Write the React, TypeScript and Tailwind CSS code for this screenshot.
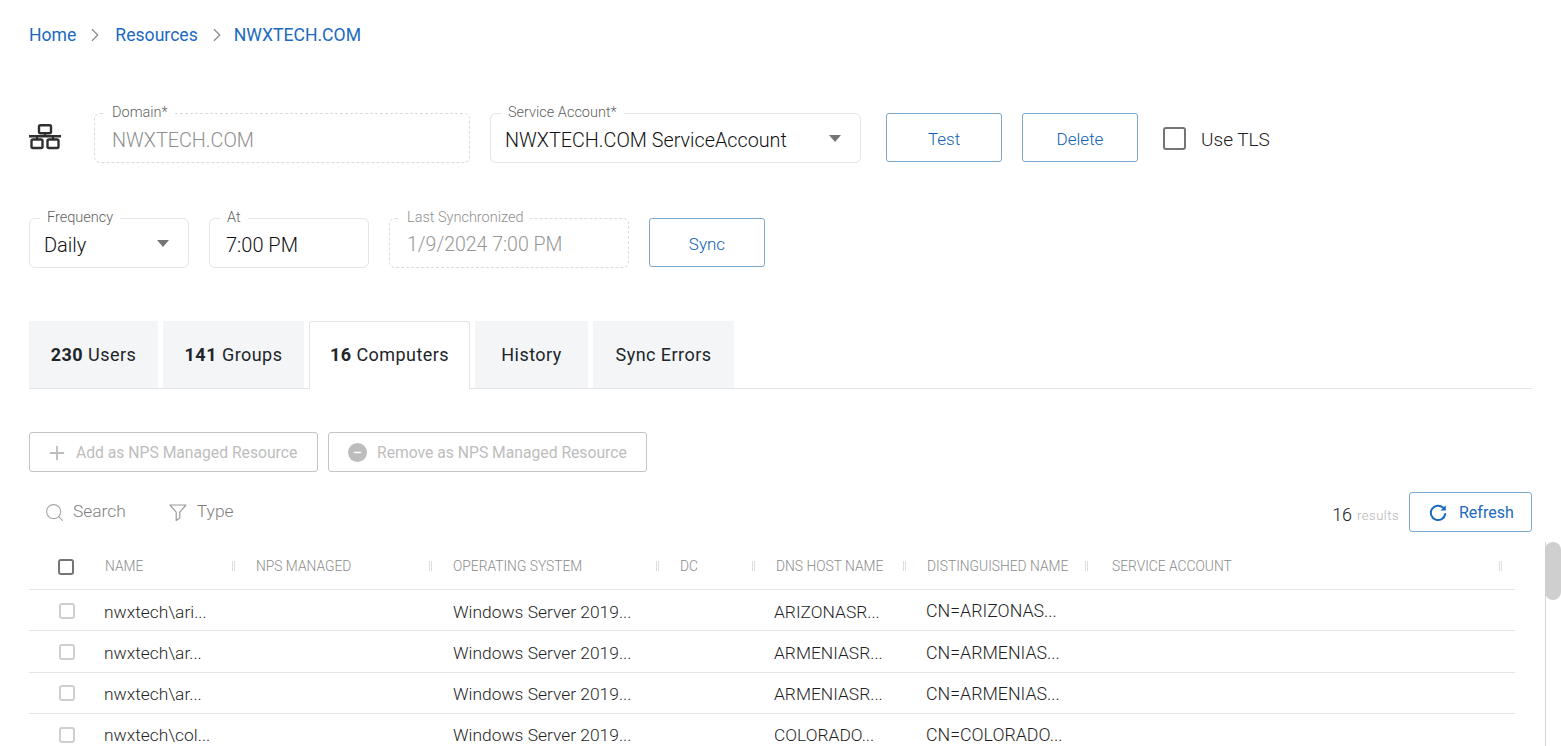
import React from "react";
import { Search, Plus, Minus, ChevronRight } from "lucide-react";

function Outlined({ label, dashed, className, children }: { label: string; dashed?: boolean; className: string; children: React.ReactNode }) {
  return (
    <div className={`relative h-[50px] rounded-[6px] border flex items-center pt-[3px] ${dashed ? "border-dashed border-[#dcdcdc]" : "border-[#e3e5e8]"} ${className}`}>
      <span className={`absolute -top-[10px] left-[10px] bg-white px-[7px] text-[14.5px] font-light leading-[18px] whitespace-nowrap ${dashed ? (label === "Domain*" ? "text-[#5f5f5f]" : "text-[#8f8f8f]") : "text-[#5f5f5f]"}`}>{label}</span>
      {children}
    </div>
  );
}

function Caret() {
  return <span className="w-0 h-0 -mt-[2px] border-l-[6.5px] border-r-[6.5px] border-t-[7px] border-l-transparent border-r-transparent border-t-[#757575]" />;
}

function OutlineButton({ children, className = "" }: { children: React.ReactNode; className?: string }) {
  return (
    <button className={`self-start w-[116px] h-[49px] pt-[4px] rounded-[3px] border border-[#7ba7d0] text-[#0f5fb5] text-[17px] font-light flex items-center justify-center ${className}`}>{children}</button>
  );
}

function Check({ dark, className = "" }: { dark?: boolean; className?: string }) {
  return <span className={`block rounded-[3px] border-2 ${dark ? "border-[#757575]" : "border-[#cfcfcf]"} ${className}`} />;
}

const cols = "grid grid-cols-[75px_151px_197px_227px_96px_151px_185px_1fr]";

function Head({ label, pr = "pr-[20px]" }: { label: string; pr?: string }) {
  return (
    <div className={`flex items-center justify-between pl-px ${pr} text-[13.8px] font-light text-[#8c8c8c] whitespace-nowrap`}>
      <span>{label}</span>
      <span className="w-[3px] h-[10px] border-x border-[#dedede]" />
    </div>
  );
}

const rows = [
  ["nwxtech\\ari...", "ARIZONASR...", "CN=ARIZONAS..."],
  ["nwxtech\\ar...", "ARMENIASR...", "CN=ARMENIAS..."],
  ["nwxtech\\ar...", "ARMENIASR...", "CN=ARMENIAS..."],
  ["nwxtech\\col...", "COLORADO...", "CN=COLORADO..."],
];

const tabs = [
  { n: "230", t: "Users", w: "w-[129px]" },
  { n: "141", t: "Groups", w: "w-[141px]" },
  { n: "16", t: "Computers", w: "w-[161px]", active: true },
  { t: "History", w: "w-[113px]" },
  { t: "Sync Errors", w: "w-[141px]" },
];

export default function App() {
  return (
    <div className="h-[746px] overflow-hidden bg-white px-[29px] font-['Roboto',sans-serif] text-[#212529]">
      <nav className="pt-[23px] h-[113px] flex items-start text-[17.6px] leading-[24px] text-[#1b6ac0]">
        <span>Home</span>
        <ChevronRight className="w-[22px] h-[22px] ml-[8px] mr-[9px] mt-px text-[#8a8a8a]" strokeWidth={1.25} />
        <span>Resources</span>
        <ChevronRight className="w-[22px] h-[22px] ml-[8px] mr-[6px] mt-px text-[#8a8a8a]" strokeWidth={1.25} />
        <span>NWXTECH.COM</span>
      </nav>

      <div className="flex items-center">
        <svg width="32" height="26" viewBox="0 0 32 26" fill="none" stroke="#2f2f2f" strokeWidth="2.4" className="shrink-0 mb-[2px]">
          <rect x="10" y="1.2" width="12" height="8" rx="1.5" />
          <path d="M16 9v3M0 12.2h32M8 12.2v3M24 12.2v3" />
          <rect x="2.5" y="15.5" width="11" height="8.5" rx="1.5" />
          <rect x="18.5" y="15.5" width="11" height="8.5" rx="1.5" />
        </svg>
        <Outlined label="Domain*" dashed className="w-[376px] ml-[33px] pl-[17px]">
          <span className="mt-[2px] text-[19.8px] font-light text-[#8f8f8f]">NWXTECH.COM</span>
        </Outlined>
        <Outlined label="Service Account*" className="w-[371px] ml-[20px] pl-[14px] pr-[19px] justify-between">
          <span className="mt-[2px] text-[19.8px] font-light text-[#111111] whitespace-nowrap">NWXTECH.COM ServiceAccount</span>
          <Caret />
        </Outlined>
        <OutlineButton className="ml-[25px]">Test</OutlineButton>
        <OutlineButton className="ml-[20px]">Delete</OutlineButton>
        <Check dark className="w-[23px] h-[23px] ml-[25px]" />
        <span className="ml-[15px] mt-[5px] text-[19px] font-light text-[#222222]">Use TLS</span>
      </div>

      <div className="flex items-center mt-[55px]">
        <Outlined label="Frequency" className="w-[160px] pl-[14px] pr-[19px] justify-between">
          <span className="text-[20px] font-light text-[#111111]">Daily</span>
          <Caret />
        </Outlined>
        <Outlined label="At" className="w-[160px] ml-[20px] pl-[16px]">
          <span className="text-[20px] font-light text-[#111111]">7:00 PM</span>
        </Outlined>
        <Outlined label="Last Synchronized" dashed className="w-[240px] ml-[20px] pl-[17px]">
          <span className="text-[19.5px] font-light text-[#969696]">1/9/2024 7:00 PM</span>
        </Outlined>
        <OutlineButton className="ml-[20px]">Sync</OutlineButton>
      </div>

      <div className="flex gap-[5px] mt-[53px] border-b border-[#e3e5e8] h-[68px] items-end">
        {tabs.map((t) => (
          <div
            key={t.t}
            className={`${t.w} flex items-center justify-center text-[18px] tracking-[0.45px] ${
              t.active ? "h-[68px] -mb-px pb-[2px] bg-white border border-b-0 border-[#e3e5e8] rounded-t-[3px]" : "h-[67px] bg-[#f3f5f7]"
            }`}
          >
            {t.n && <b className="font-bold mr-[5px]">{t.n}</b>}
            <span>{t.t}</span>
          </div>
        ))}
      </div>

      <div className="flex gap-[10px] mt-[43px]">
        <button className="w-[289px] h-[40px] pt-px rounded-[3px] border border-[#c4c4c4] flex items-center pl-[16px] text-[15.7px] text-[#bdbdbd]">
          <Plus className="w-[22px] h-[22px] mr-[8px] text-[#bdbdbd]" strokeWidth={2} />
          Add as NPS Managed Resource
        </button>
        <button className="w-[319px] h-[40px] pt-px rounded-[3px] border border-[#c4c4c4] flex items-center pl-[19px] text-[15.7px] text-[#bdbdbd]">
          <span className="w-[19px] h-[19px] mr-[10px] rounded-full bg-[#bdbdbd] flex items-center justify-center">
            <Minus className="w-[11px] h-[11px] text-white" strokeWidth={3} />
          </span>
          Remove as NPS Managed Resource
        </button>
      </div>

      <div className="flex items-center mt-[20px] h-[40px]">
        <Search className="w-[21px] h-[21px] ml-[15px] text-[#a8a8a8]" strokeWidth={1.25} />
        <span className="ml-[8px] -mt-[2px] text-[17.4px] font-light text-[#7f7f7f]">Search</span>
        <svg width="20" height="20" viewBox="0 0 20 20" fill="none" stroke="#9c9c9c" strokeWidth="1.2" className="ml-[42px]">
          <path d="M2 3h16l-6.2 7.2V16l-3.6 2.4v-8.2z" strokeLinejoin="round" />
        </svg>
        <span className="ml-[9px] -mt-[2px] text-[17.4px] font-light text-[#7f7f7f]">Type</span>
        <span className="ml-auto text-[18px] font-light text-[#222222] mt-[5px]">16</span>
        <span className="ml-[5px] mr-[10px] text-[13px] font-light text-[#b5b5b5] mt-[7px] tracking-[0.5px]">results</span>
        <button className="w-[123px] h-[40px] pt-px rounded-[3px] border border-[#7ba7d0] flex items-center pl-[18px] text-[16px] text-[#1b6ac0]">
          <svg width="20" height="20" viewBox="0 0 20 20" fill="none" className="mr-[11px]">
            <path d="M15 4.6A7.2 7.2 0 1 0 17.2 11" stroke="#1b6ac0" strokeWidth="2" strokeLinecap="round" />
            <path d="M17.8 2.2v5.4h-5.4z" fill="#1b6ac0" />
          </svg>
          Refresh
        </button>
      </div>

      <div className="flex -mr-[29px] mt-[13px]">
        <div className="w-[1486px] shrink-0">
          <div className={`${cols} h-[45px] pb-[2px] items-center border-b border-[#e3e5e8]`}>
            <div className="pl-[29px] mt-[2px]"><Check dark className="w-[16px] h-[16px]" /></div>
            <Head label="NAME" />
            <Head label="NPS MANAGED" />
            <Head label="OPERATING SYSTEM" />
            <Head label="DC" />
            <Head label="DNS HOST NAME" />
            <Head label="DISTINGUISHED NAME" pr="pr-[23px]" />
            <Head label="SERVICE ACCOUNT" pr="pr-[13px]" />
          </div>
          {rows.map((r, i) => (
            <div key={i} className={`${cols} h-[41.3px] pt-[3px] items-center border-b border-[#e3e5e8] text-[17.4px] font-light text-[#1f1f1f] whitespace-nowrap`}>
              <div className="pl-[30px] -mt-[2px]"><Check className="w-[16px] h-[16px]" /></div>
              <div>{r[0]}</div>
              <div />
              <div className="pl-px">{r.length ? "Windows Server 2019..." : ""}</div>
              <div />
              <div className="-ml-px">{r[1]}</div>
              <div className="text-[17.8px]">{r[2]}</div>
              <div />
            </div>
          ))}
        </div>
        <div className="ml-[30px] w-[16px] -mt-[3px] border-l border-[#d5d5d5]">
          <div className="h-[58px] -ml-px w-[16px] rounded-[8px] bg-[#cfcfcf]" />
        </div>
      </div>
    </div>
  );
}
